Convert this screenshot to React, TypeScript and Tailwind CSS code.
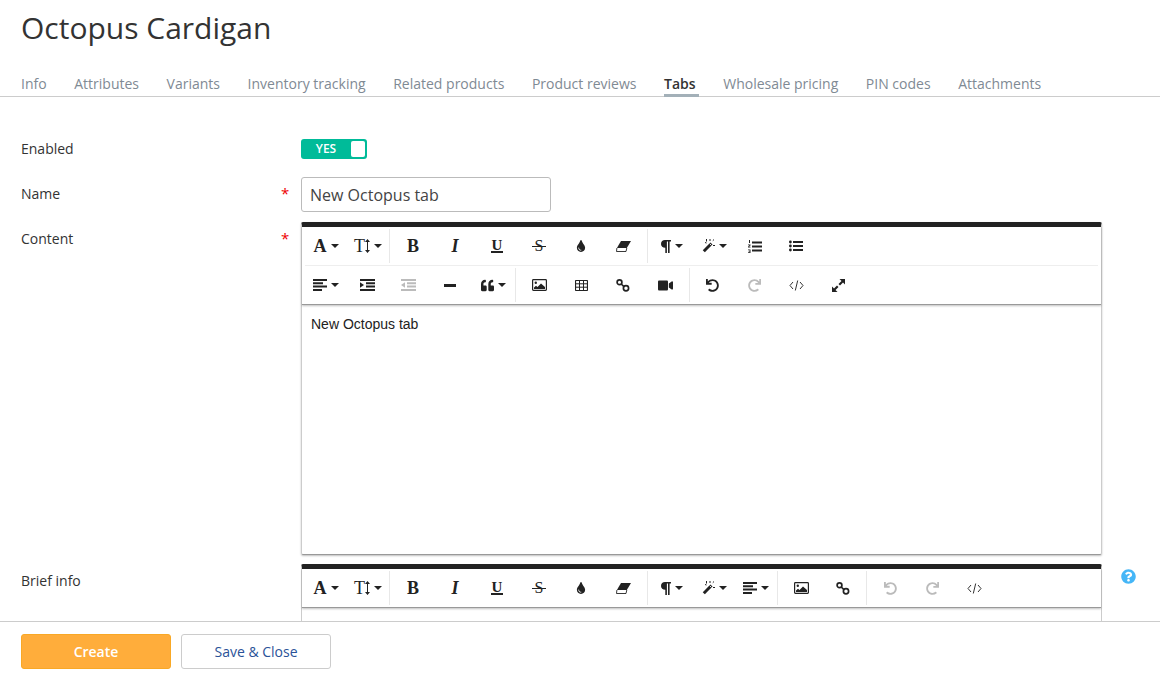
import { ReactNode } from 'react';
import { FaQuestionCircle, FaQuoteLeft, FaRedo, FaTint, FaUndo, FaVideo } from 'react-icons/fa';

const tabs = [
  'Info',
  'Attributes',
  'Variants',
  'Inventory tracking',
  'Related products',
  'Product reviews',
  'Tabs',
  'Wholesale pricing',
  'PIN codes',
  'Attachments',
];

function Caret() {
  return <span className="ml-[4px] inline-block h-0 w-0 border-x-[4px] border-t-[4px] border-x-transparent border-t-[#222]" />;
}

function Tool({ children, caret, w = 'w-[42px]' }: { children: ReactNode; caret?: boolean; w?: string }) {
  return (
    <div className={`flex h-[34px] shrink-0 items-center justify-center text-[#222] ${w}`}>
      {children}
      {caret && <Caret />}
    </div>
  );
}

function Sep({ className = '' }: { className?: string }) {
  return <div className={`h-[34px] w-px shrink-0 bg-[#e8e8e8] ${className}`} />;
}

function Letter({ children, className = '' }: { children: ReactNode; className?: string }) {
  return <span className={`font-['Liberation_Serif',serif] leading-none ${className}`}>{children}</span>;
}

const FontIcon = () => <Letter className="text-[18px] font-bold">A</Letter>;
const HeightIcon = () => (
  <span className="flex items-center">
    <Letter className="text-[18px]">T</Letter>
    <svg width="5" height="14" viewBox="0 0 5 14" fill="#222">
      <path d="M2.500 0 5 3H3v8h2l-2.500 3L0 11h2V3H0z" />
    </svg>
  </span>
);
const Bold = () => <Letter className="text-[18px] font-bold">B</Letter>;
const Italic = () => <Letter className="text-[18px] font-bold italic">I</Letter>;
const Underline = () => (
  <span className="flex h-[14px] w-[12px] justify-center border-b-[2px] border-[#222]">
    <span className="font-['Liberation_Serif',serif] text-[15px] font-bold leading-[12px]">U</span>
  </span>
);
const Strike = () => (
  <span className="relative flex h-[14px] w-[14px] items-center justify-center">
    <span className="font-['Liberation_Serif',serif] text-[16px] leading-none">S</span>
    <span className="absolute inset-x-0 top-[7px] h-px bg-[#222]" />
  </span>
);

function Lines({ kind }: { kind: 'left' | 'indent' | 'outdent' }) {
  const fill = kind === 'outdent' ? '#bbb' : '#222';
  if (kind === 'left') {
    return (
      <svg width="14" height="12" viewBox="0 0 14 12" fill={fill}>
        <path d="M0 0h14v2H0zM0 3.300h10v2H0zM0 6.600h14v2H0zM0 10h9v2H0z" />
      </svg>
    );
  }
  return (
    <svg width="15" height="12" viewBox="0 0 15 12" fill={fill}>
      <path d="M0 0h15v2H0zM6 3.300h9v2H6zM6 6.600h9v2H6zM0 10h15v2H0z" />
      {kind === 'indent' ? <path d="M0 3.200 4 6 0 8.800z" /> : <path d="M4 3.200 0 6l4 2.800z" />}
    </svg>
  );
}

const Rule = () => <div className="h-[3px] w-[12px] bg-[#222]" />;

const LinkIcon = () => (
  <svg width="14" height="13" viewBox="0 0 14 13" fill="none" stroke="#222" strokeWidth="1.700">
    <circle cx="3.500" cy="3.300" r="2.400" />
    <circle cx="10" cy="9.300" r="2.600" />
    <path d="M5.200 5l3 2.800" />
  </svg>
);

const CodeIcon = () => (
  <svg width="15" height="11" viewBox="0 0 15 11" fill="none" stroke="#333" strokeWidth="1">
    <path d="M4 2 1 5.500 4 9M11 2l3 3.500L11 9M8.700.5 6.300 10.500" />
  </svg>
);

const ExpandIcon = () => (
  <svg width="13" height="13" viewBox="0 0 13 13" fill="#222">
    <path d="M7.500 0H13v5.500L11 3.500 8 6.500 6.500 5l3-3zM5.500 13H0V7.500L2 9.500 5 6.500 6.500 8l-3 3z" />
  </svg>
);

const ParagraphIcon = () => (
  <svg width="10" height="13" viewBox="0 0 10 13" fill="#222">
    <path d="M4 0h6v1.600H8.600V13H7V1.600H5.900V13H4.300V7.800C1.700 7.700 0 6.200 0 3.900 0 1.600 1.700 0 4 0z" />
  </svg>
);

const MagicIcon = () => (
  <svg width="13" height="14" viewBox="0 0 13 14" fill="none" stroke="#222">
    <path d="M1.800 12.200 9.500 4.500" strokeWidth="3" />
    <path d="M7.800 4.800 9.300 6.300" stroke="#fff" strokeWidth="0.900" />
    <path d="M4.500 0v2.500M3 3.500l1.500.5M8 0v2M12 .5l-1.200 1.200M13 6.500h-2" strokeWidth="1" />
  </svg>
);

const EraserIcon = () => (
  <svg width="15" height="11" viewBox="0 0 15 11" fill="#222">
    <path d="M5 0h10l-4.200 7H.9z" />
    <path d="M.9 7 .5 10.500H10L10.800 7" fill="none" stroke="#222" strokeWidth="0.900" />
  </svg>
);

const OlIcon = () => (
  <svg width="14" height="13" viewBox="0 0 14 13" fill="#222">
    <path d="M4 1.500h10v2H4zM4 5.500h10v2H4zM4 9.500h10v2H4z" />
    <path d="M1 0h1v3H1zM0 4.500h2.500v1L1 6.800h1.500v.7H0v-.8l1.500-1.400H0zM0 9.500h2.500v3.500H0v-.7h1.600v-.7H.6v-.7h1v-.7H0z" />
  </svg>
);

const UlIcon = () => (
  <svg width="14" height="12" viewBox="0 0 14 12" fill="#222">
    <path d="M4 1h10v2H4zM4 5h10v2H4zM4 9h10v2H4z" />
    <circle cx="1.400" cy="2" r="1.400" />
    <circle cx="1.400" cy="6" r="1.400" />
    <circle cx="1.400" cy="10" r="1.400" />
  </svg>
);

const ImageIcon = () => (
  <svg width="15" height="12" viewBox="0 0 15 12" fill="#222">
    <rect x="0.600" y="0.600" width="13.800" height="10.800" rx="0.800" fill="none" stroke="#222" strokeWidth="1.200" />
    <circle cx="3.800" cy="3.800" r="1.200" />
    <path d="M2 10V8.500L4 6.800l1.500 1.300L9 4.500l4 3.500v2z" />
  </svg>
);

const TableIcon = () => (
  <svg width="13" height="11" viewBox="0 0 13 11" fill="none" stroke="#222" strokeWidth="1">
    <rect x="0.500" y="0.500" width="12" height="10" rx="0.800" strokeWidth="1.200" />
    <path d="M0 3.800h13M0 7.200h13M4.500 0v11M8.500 0v11" />
  </svg>
);

function ContentToolbar() {
  return (
    <div className="border-b border-[#999] bg-white shadow-[0_1px_2px_rgba(0,0,0,0.25)]">
      <div className="flex items-center py-[2px] pl-[3px]">
        <Tool caret><FontIcon /></Tool>
        <Tool caret><HeightIcon /></Tool>
        <Sep className="mr-[2px]" />
        <Tool><Bold /></Tool>
        <Tool><Italic /></Tool>
        <Tool><Underline /></Tool>
        <Tool><Strike /></Tool>
        <Tool><FaTint size={12} /></Tool>
        <Tool><EraserIcon /></Tool>
        <Sep className="mx-[3px]" />
        <Tool caret><ParagraphIcon /></Tool>
        <Tool caret><MagicIcon /></Tool>
        <Tool w="w-[40px]"><OlIcon /></Tool>
        <Tool><UlIcon /></Tool>
      </div>
      <div className="mx-[3px] h-px bg-[#eee]" />
      <div className="flex items-center py-[2px] pl-[3px]">
        <Tool caret><Lines kind="left" /></Tool>
        <Tool w="w-[40px]"><Lines kind="indent" /></Tool>
        <Tool><Lines kind="outdent" /></Tool>
        <Tool><Rule /></Tool>
        <Tool w="w-[44px]" caret><FaQuoteLeft size={13} /></Tool>
        <Sep className="mr-[2px]" />
        <Tool><ImageIcon /></Tool>
        <Tool><TableIcon /></Tool>
        <Tool><LinkIcon /></Tool>
        <Tool><FaVideo size={15} /></Tool>
        <Sep className="ml-[3px] mr-[1px]" />
        <Tool><FaUndo size={13} /></Tool>
        <Tool><FaRedo size={13} className="text-[#bbb]" /></Tool>
        <Tool><CodeIcon /></Tool>
        <Tool><ExpandIcon /></Tool>
      </div>
    </div>
  );
}

function BriefToolbar() {
  return (
    <div className="border-b border-[#999] bg-white shadow-[0_1px_2px_rgba(0,0,0,0.25)]">
      <div className="flex items-center py-[2px] pl-[3px]">
        <Tool caret><FontIcon /></Tool>
        <Tool caret><HeightIcon /></Tool>
        <Sep className="mr-[2px]" />
        <Tool><Bold /></Tool>
        <Tool><Italic /></Tool>
        <Tool><Underline /></Tool>
        <Tool><Strike /></Tool>
        <Tool><FaTint size={12} /></Tool>
        <Tool><EraserIcon /></Tool>
        <Sep className="mx-[3px]" />
        <Tool caret><ParagraphIcon /></Tool>
        <Tool caret><MagicIcon /></Tool>
        <Tool caret><Lines kind="left" /></Tool>
        <Sep className="mr-[2px]" />
        <Tool><ImageIcon /></Tool>
        <Tool><LinkIcon /></Tool>
        <Sep className="mx-[2px]" />
        <Tool><FaUndo size={13} className="text-[#bbb]" /></Tool>
        <Tool><FaRedo size={13} className="text-[#bbb]" /></Tool>
        <Tool><CodeIcon /></Tool>
      </div>
    </div>
  );
}

function Label({ children, required }: { children: ReactNode; required?: boolean }) {
  return (
    <div className="flex w-[280px] shrink-0 pt-[5px] text-[14px] leading-[20px] text-[#333]">
      <span className="w-[260px] pt-[2px]">{children}</span>
      {required && <span className="pt-[1px] text-[15px] font-normal text-[#e00]">*</span>}
    </div>
  );
}

export default function App() {
  return (
    <div className="flex h-[675px] w-[1160px] flex-col overflow-hidden bg-white font-['Open_Sans',sans-serif]">
      <main className="min-h-0 flex-1 overflow-hidden">
        <h1 className="pl-[21px] pt-[8px] text-[30px] leading-[40px] text-[#333]">Octopus Cardigan</h1>

        <nav className="mt-[23px] flex h-[26px] gap-[27.6px] border-b border-[#ccc] pl-[21px]">
          {tabs.map((tab) =>
            tab === 'Tabs' ? (
              <span key={tab} className="-mr-[3px] h-[26px] border-b-[3px] border-[#a3b0b8] pr-[3px] text-[14px] font-semibold leading-[25px] text-[#333]">
                {tab}
              </span>
            ) : (
              <span key={tab} className="text-[14px] leading-[25px] text-[#7f8a94]">{tab}</span>
            ),
          )}
        </nav>

        <div className="pl-[21px] pt-[42px]">
          <div className="flex h-[20px] items-center">
            <div className="w-[280px] shrink-0 pb-[1px] text-[14px] leading-[20px] text-[#333]">Enabled</div>
            <div className="flex h-[20px] w-[66px] items-center rounded-[3px] bg-[#00bb99] p-[2px]">
              <span className="flex-1 pb-[1px] pr-[2px] text-center text-[12px] font-semibold leading-none text-white">YES</span>
              <span className="h-[16px] w-[14px] rounded-[2px] bg-white" />
            </div>
          </div>

          <div className="mt-[18px] flex">
            <Label required>Name</Label>
            <div className="flex h-[35px] w-[250px] items-center rounded-[3px] border border-[#bbb] px-[8px] text-[16px] text-[#444]">
              New Octopus tab
            </div>
          </div>

          <div className="mt-[10px] flex">
            <Label required>Content</Label>
            <div className="h-[333px] w-[801px] rounded-[2px] border-x border-t-[5px] border-b border-x-[#ccc] border-t-[#222] border-b-[#999] shadow-[0_1px_2px_rgba(0,0,0,0.25)]">
              <ContentToolbar />
              <p className="px-[9px] pt-[11px] font-['Liberation_Sans',sans-serif] text-[14px] leading-[16px] text-[#222]">
                New Octopus tab
              </p>
            </div>
          </div>

          <div className="mt-[9px] flex">
            <Label>Brief info</Label>
            <div className="h-[200px] w-[801px] shrink-0 rounded-[2px] border-x border-t-[5px] border-x-[#ccc] border-t-[#222]">
              <BriefToolbar />
            </div>
            <FaQuestionCircle size={15} className="ml-[19px] mt-[5px] shrink-0 text-[#45b6f7]" />
          </div>
        </div>
      </main>

      <footer className="flex h-[54px] shrink-0 gap-[10px] border-t border-[#ccc] bg-white pl-[21px] pt-[12px]">
        <button className="h-[35px] w-[150px] rounded-[3px] border border-[#f9a825] bg-[#ffad3b] text-[14px] font-semibold text-white">
          Create
        </button>
        <button className="h-[35px] w-[150px] rounded-[3px] border border-[#ccc] bg-white text-[14px] text-[#2a5298]">
          Save &amp; Close
        </button>
      </footer>
    </div>
  );
}
